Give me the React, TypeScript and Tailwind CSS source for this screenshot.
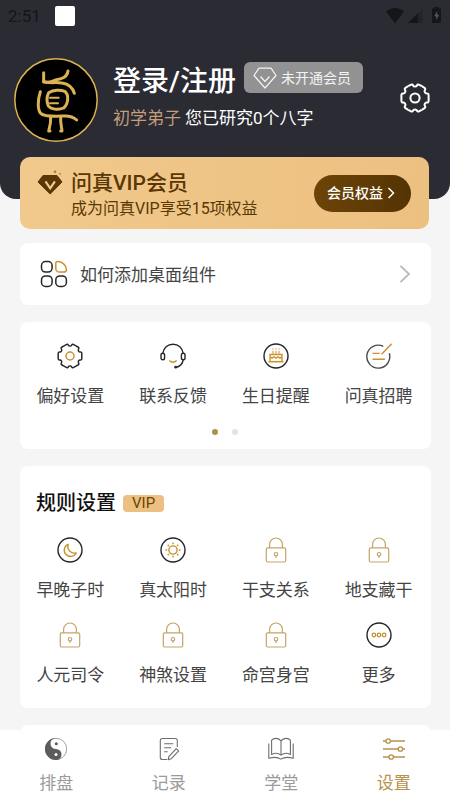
import type { ReactNode } from 'react';

const TOOTH =
  'M13.6 0V2.8C13.6 4.2 12.9 4.7 11.8 4.6C10.8 4.5 10.3 4.95 9.87 5.7C9.44 6.45 9.3 7.1 9.88 7.92C10.52 8.82 10.44 9.68 9.22 10.38L6.8 11.78';
const GOLD = '#c8922e';
const INK = '#26262b';

function Gear({ className, inner, width }: { className: string; inner: string; width: number }) {
  return (
    <svg viewBox="-15 -15 30 30" className={className} fill="none" stroke="currentColor" strokeWidth={width} aria-hidden="true">
      {[0, 60, 120, 180, 240, 300].map((a) => (
        <path key={a} d={TOOTH} transform={`rotate(${a})`} />
      ))}
      <circle r="4.6" stroke={inner} />
    </svg>
  );
}

function Icon({ children }: { children?: ReactNode }) {
  return (
    <svg viewBox="0 0 26 26" className="size-[26px]" fill="none" stroke={INK} strokeWidth="1.4" aria-hidden="true">
      {children}
    </svg>
  );
}

function Ring() {
  return <circle cx="13" cy="13" r="12" />;
}

function Lock() {
  return (
    <Icon>
      <g stroke="#c5a468" strokeWidth="1.2">
        <rect x="3.3" y="10.8" width="19.4" height="14.2" rx="1.5" />
        <path d="M6.6 10.8V7.4a6.4 6.4 0 0 1 12.8 0v3.4" />
        <circle cx="13" cy="17.2" r="1.7" />
        <path d="M13 18.9v2.2" />
      </g>
    </Icon>
  );
}

function Headset() {
  return (
    <Icon>
      <path d="M2.7 10.6C3.5 5 7.6 1.2 13 1.2S22.5 5 23.3 10.6" />
      <rect x="1" y="10.3" width="3.6" height="6.4" rx="1.8" />
      <rect x="21.4" y="10.3" width="3.6" height="6.4" rx="1.8" />
      <path d="M23.2 17c-.8 4-3.6 6.6-6.7 7.2" />
      <circle cx="15.7" cy="24.2" r="1.4" fill={INK} stroke="none" />
      <path d="M9.3 17.6c2.2 2 5.2 2 7.4 0" stroke={GOLD} />
    </Icon>
  );
}

function Cake() {
  return (
    <Icon>
      <Ring />
      <g stroke={GOLD} strokeWidth="1.3">
        <path d="M7 18.5v-7h12v7" />
        <path d="M5.5 18.7h15" strokeWidth="1.6" />
        <path d="M7 13.8l2 1.3 2-1.3 2 1.3 2-1.3 2 1.3 2-1.3" />
        <path d="M10 7.8v3M13 7.8v3M16 7.8v3" strokeWidth="1" />
        <path d="M10 5.4v1.2M13 5.4v1.2M16 5.4v1.2" strokeWidth="1" />
      </g>
    </Icon>
  );
}

function Recruit() {
  return (
    <Icon>
      <path d="M17.3 3.3A11.5 11.5 0 1 0 23.3 10.3" stroke="#4a4a50" />
      <path d="M25.6.8 15.6 11.2M6.5 10.4h7.3M6.5 16.2h12.4" stroke={GOLD} />
    </Icon>
  );
}

function Moon() {
  return (
    <Icon>
      <Ring />
      <path d="M11.2 7.3a6.3 6.3 0 1 0 8.1 8.5 6.6 6.6 0 0 1-8.1-8.5Z" stroke={GOLD} strokeLinejoin="round" />
    </Icon>
  );
}

function Sun() {
  return (
    <Icon>
      <Ring />
      <circle cx="13" cy="13" r="4.1" stroke={GOLD} />
      <path
        d="M13 5.5v1.7M13 18.8v1.7M5.5 13h1.7M18.8 13h1.7M7.7 7.7l1.2 1.2M17.1 17.1l1.2 1.2M7.7 18.3l1.2-1.2M17.1 8.9l1.2-1.2"
        stroke={GOLD}
      />
    </Icon>
  );
}

function More() {
  return (
    <Icon>
      <Ring />
      <g stroke={GOLD} strokeWidth="1.3">
        <circle cx="7.9" cy="13" r="1.8" />
        <circle cx="13" cy="13" r="1.8" />
        <circle cx="18.1" cy="13" r="1.8" />
      </g>
    </Icon>
  );
}

function Avatar() {
  return (
    <svg viewBox="6 6 252 252" className="size-[84px] shrink-0" fill="none" stroke="#dcb252" strokeLinecap="round" strokeLinejoin="round" aria-hidden="true">
      <circle cx="132" cy="132" r="123.5" fill="#000" strokeWidth="4.5" />
      <g strokeWidth="9">
        <path d="M95 50V77C106 80 118 78 130 72C150 69 165 64 168 45" />
        <path d="M95 78C122 82 134 78 150 81C170 84 182 94 187 112" />
        <path d="M85 107C77 132 76 160 86 172C98 184 135 181 160 180C175 180 185 184 194 192" />
        <path d="M110 110C124 101 146 101 158 106C172 116 169 144 155 156C140 163 116 160 109 150C104 138 104 122 110 110Z" />
        <path d="M114 125H140M114 142H138" strokeWidth="6" />
        <path d="M116 184C117 202 113 214 110 225H114M146 184C145 202 149 214 150 225H146" />
      </g>
    </svg>
  );
}

function StatusBar() {
  return (
    <div className="flex h-8 items-center px-2 text-[#15151a]">
      <span className="text-[17px] leading-5">2:51</span>
      <span className="ml-[14px] size-5 rounded-[2px] bg-white" />
      <svg viewBox="0 0 56 18" className="ml-auto h-[18px] w-14" fill="currentColor" aria-hidden="true">
        <path d="M0 4.5C5-.3 13-.3 18 4.5L9 16.5Z" />
        <path d="M36.500 2v14H22Z" opacity=".35" />
        <path d="M32 6.3V16H22Z" />
        <path d="M48.5 1.5V0h4v1.500H54c.6 0 1 .4 1 1V15c0 .6-.4 1-1 1h-7c-.6 0-1-.4-1-1V2.500c0-.6.4-1 1-1Z" />
        <path d="M51.2 4l-3 5.3h2V13l3-5.3h-2Z" fill="#55555c" />
      </svg>
    </div>
  );
}

function Header() {
  return (
    <header className="rounded-b-2xl bg-[#2b2b33] pb-[57px]">
      <StatusBar />
      <div className="mt-[26px] flex h-[84px] items-center pr-5 pl-[14px]">
        <Avatar />
        <div className="mb-[5px] ml-[15px] flex-1 whitespace-nowrap text-white">
          <div className="flex items-center">
            <h1 className="text-[28px] leading-10 font-medium">登录/注册</h1>
            <span className="mb-2 ml-2 flex h-[31px] items-center rounded-md bg-[#929292] pr-3 pl-[9px] text-sm text-[#f4f4f4]">
              <svg viewBox="0 0 24 22" className="mr-1 h-[22px] w-6" fill="none" stroke="currentColor" strokeWidth="1.2" strokeLinejoin="round" aria-hidden="true">
                <path d="M6 1.2H18L23 8.5 12 21 1 8.500Z" />
                <path d="M7.500 9.500l4.500 5 4.500-5" />
              </svg>
              未开通会员
            </span>
          </div>
          <p className="text-[17px] leading-8">
            <span className="mr-1 text-[#c39d7c]">初学弟子</span>您已研究0个八字
          </p>
        </div>
        <button type="button" aria-label="设置" className="mb-1 text-white">
          <Gear className="size-[30px]" inner="currentColor" width={2} />
        </button>
      </div>
    </header>
  );
}

function VipBanner() {
  return (
    <section className="-mt-[42px] mr-0.5 flex h-[72px] items-center rounded-[10px] bg-linear-to-r from-[#f1c98c] to-[#ecc080] pr-[18px] pl-[17px] text-[#5a3705]">
      <svg viewBox="0 0 26 26" className="-mt-5 size-[26px]" aria-hidden="true">
        <path d="M6 5.500H20L25 12 13.2 24 1 12Z" fill="currentColor" stroke="currentColor" strokeLinejoin="round" />
        <path d="M8.500 11.300l4.700 7 4.700-7" fill="none" stroke="#f1c98c" strokeWidth="2.2" />
        <circle cx="18" cy="1.7" r="1.3" fill="#a97b3e" />
        <circle cx="23" cy="3.8" r=".9" fill="#a97b3e" />
      </svg>
      <div className="mt-[3px] ml-2 flex-1 whitespace-nowrap">
        <h2 className="text-[21px] leading-7 font-medium">问真VIP会员</h2>
        <p className="text-base leading-6">成为问真VIP享受15项权益</p>
      </div>
      <button type="button" className="flex h-[37px] items-center rounded-full bg-linear-to-r from-[#6d4407] to-[#543404] pr-4 pl-[13px] text-sm font-medium text-white">
        会员权益
        <svg viewBox="0 0 8 12" className="ml-1 h-3 w-2" fill="none" stroke="currentColor" strokeWidth="1.5" aria-hidden="true">
          <path d="M1.500 1 6.500 6 1.500 11" />
        </svg>
      </button>
    </section>
  );
}

function WidgetRow() {
  return (
    <a href="#widget" className="flex h-[62px] items-center rounded-lg bg-white px-5 text-[17px] text-[#444]">
      <svg viewBox="0 0 28 28" className="size-7" fill="none" stroke={INK} strokeWidth="1.5" aria-hidden="true">
        <rect x="1.5" y="1.5" width="10.6" height="10.6" rx="4" />
        <path d="M15.8 3v5.500a3.600 3.600 0 0 0 3.600 3.600h4.400a2.600 2.600 0 0 0 2.600-2.600C26.400 5 22 1.500 17.300 1.500A1.500 1.500 0 0 0 15.800 3Z" stroke={GOLD} />
        <rect x="1.5" y="15.9" width="10.6" height="10.6" rx="4" />
        <rect x="15.8" y="15.9" width="10.6" height="10.6" rx="4" />
      </svg>
      <span className="mt-[3px] ml-3 flex-1">如何添加桌面组件</span>
      <svg viewBox="0 0 12 20" className="h-5 w-3" fill="none" stroke="#b9b9b9" strokeWidth="1.8" aria-hidden="true">
        <path d="M1.500 1.800 10 10 1.500 18.200" />
      </svg>
    </a>
  );
}

function Item({ label, icon }: { label: string; icon: ReactNode }) {
  return (
    <button type="button" className="flex flex-col items-center gap-[14px] whitespace-nowrap text-[17px] leading-[26px] text-[#444]">
      {icon}
      {label}
    </button>
  );
}

const TABS = [
  {
    label: '排盘',
    icon: (
      <>
        <circle cx="13" cy="13" r="10.7" fill="none" stroke="#8a8a8a" strokeWidth=".8" />
        <path d="M13 2a11 11 0 1 0 0 22 5.500 5.500 0 0 0 0-11 5.500 5.500 0 0 1 0-11Z" fill="#5c5c5c" stroke="none" />
        <circle cx="13.3" cy="7.8" r="1.5" fill="#5c5c5c" stroke="none" />
        <circle cx="13" cy="18.4" r="1.5" fill="#fff" stroke="none" />
      </>
    ),
  },
  {
    label: '记录',
    icon: (
      <>
        <path d="M21.300 11V4.500a2 2 0 0 0-2-2h-13a2 2 0 0 0-2 2v17a2 2 0 0 0 2 2h5" />
        <path d="M8.200 7.800h9M8.200 11.800h7M8.200 15.800h3.500" />
        <path d="M12.800 20.600 20.300 12.600l2.400 2.200-7.400 7.900-3 .9Z" />
      </>
    ),
  },
  {
    label: '学堂',
    icon: (
      <>
        <path d="M13 4.800C10.500 1.800 6 1.600 3.600 4.200v14.300c3-1.600 7-1.300 9.400.7 2.400-2 6.400-2.300 9.400-.7V4.200C20 1.600 15.500 1.800 13 4.800Zm0 0v14.400" />
        <path d="M.8 7.500v14.800c4.200-1.200 9-1.200 12.200.8 3.200-2 8-2 12.200-.8V7.500" />
      </>
    ),
  },
  {
    label: '设置',
    icon: (
      <g strokeWidth="1.3">
        <path d="M2 5h3M9.400 5H24M2 13h15.200M21.600 13H24M2 21h6M12.400 21H24" />
        <circle cx="7.2" cy="5" r="2.2" />
        <circle cx="19.4" cy="13" r="2.2" />
        <circle cx="10.2" cy="21" r="2.2" />
      </g>
    ),
  },
];

export default function App() {
  return (
    <div className="flex h-screen flex-col bg-[#f5f5f5] font-[Roboto,'Noto_Sans_CJK_SC',sans-serif]">
      <main className="min-h-0 flex-1 overflow-y-auto [scrollbar-width:none]">
        <Header />
        <div className="flex flex-col pr-[19px] pl-5">
          <VipBanner />
          <div className="mt-[14px]">
            <WidgetRow />
          </div>
          <section className="mt-[17px] rounded-lg bg-white pt-[21px] pb-[14px]">
            <div className="mr-px -ml-px grid grid-cols-4">
              <Item label="偏好设置" icon={<Gear className="size-[26px] text-[#26262b]" inner={GOLD} width={1.7} />} />
              <Item label="联系反馈" icon={<Headset />} />
              <Item label="生日提醒" icon={<Cake />} />
              <Item label="问真招聘" icon={<Recruit />} />
            </div>
            <div className="mt-5 mr-px -ml-px flex justify-center gap-[14px]">
              <span className="size-[6px] rounded-full bg-[#b0904a]" />
              <span className="size-[6px] rounded-full bg-[#e4e4e4]" />
            </div>
          </section>
          <section className="mt-[17px] rounded-lg bg-white pt-[21px] pb-5">
            <div className="flex items-center pl-4">
              <h2 className="text-xl leading-8 font-medium text-[#111]">规则设置</h2>
              <span className="ml-[7px] rounded bg-[#ecc080] px-[9px] text-[15px] leading-[17px] text-[#6d4407]">VIP</span>
            </div>
            <div className="mt-[18px] mr-px -ml-px grid grid-cols-4 gap-y-[19px]">
              <Item label="早晚子时" icon={<Moon />} />
              <Item label="真太阳时" icon={<Sun />} />
              <Item label="干支关系" icon={<Lock />} />
              <Item label="地支藏干" icon={<Lock />} />
              <Item label="人元司令" icon={<Lock />} />
              <Item label="神煞设置" icon={<Lock />} />
              <Item label="命宫身宫" icon={<Lock />} />
              <Item label="更多" icon={<More />} />
            </div>
          </section>
          <section className="mt-[17px] h-16 shrink-0 rounded-lg bg-white" />
        </div>
      </main>
      <nav className="grid h-[70px] shrink-0 grid-cols-4 bg-white">
        {TABS.map(({ label, icon }, i) => (
          <button
            key={label}
            type="button"
            className={`flex flex-col items-center gap-2 pt-[6px] text-[17px] leading-[26px] ${i === 3 ? 'text-[#b8924a]' : 'text-[#9b9b9b]'}`}
          >
            <svg viewBox="0 0 26 26" className="size-[26px]" fill="none" stroke={i === 3 ? '#b8924a' : '#6e6e6e'} strokeWidth="1.1" strokeLinejoin="round" aria-hidden="true">
              {icon}
            </svg>
            {label}
          </button>
        ))}
      </nav>
    </div>
  );
}
